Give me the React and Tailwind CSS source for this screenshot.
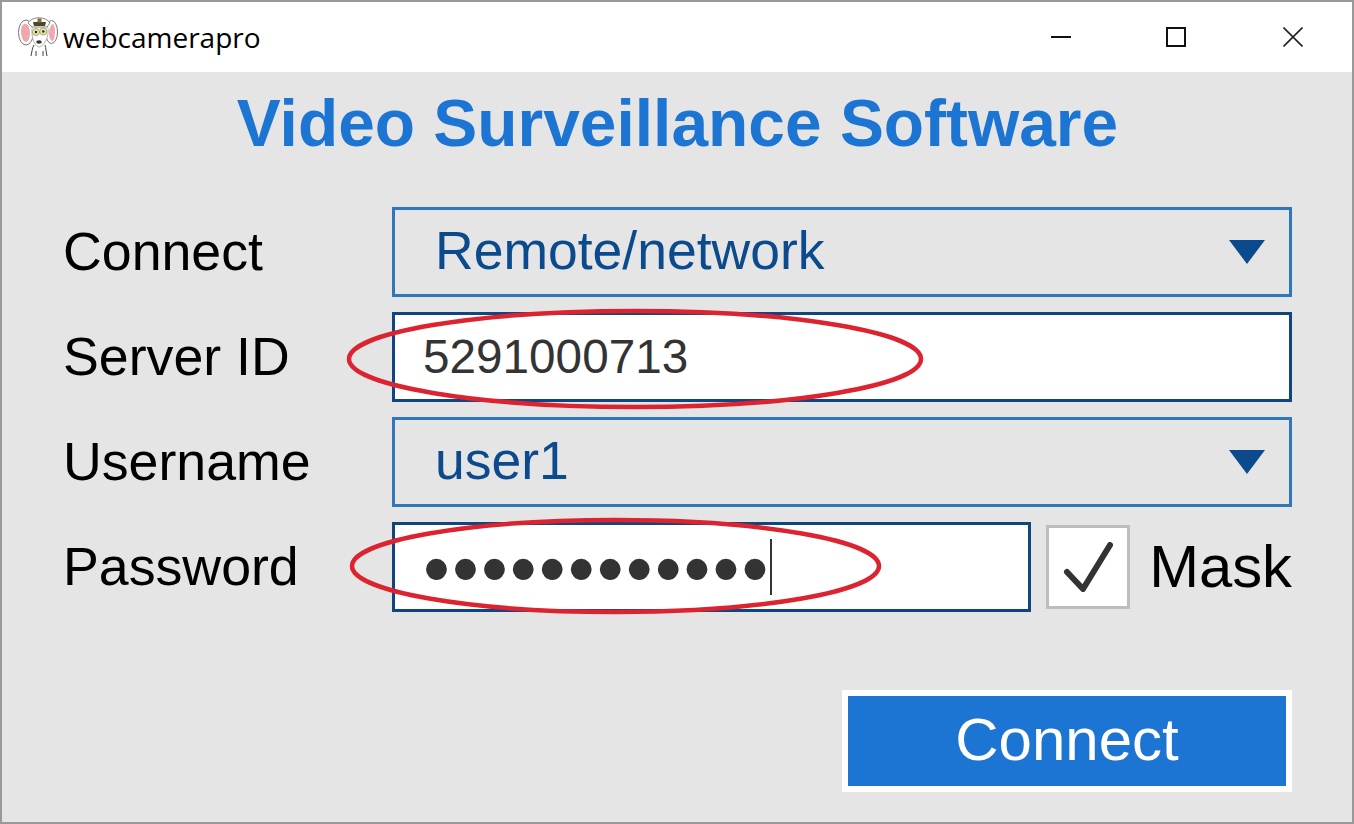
const LIB = "font-['Liberation_Sans',Arial,sans-serif]";

function Mascot() {
  return (
    <svg width="42" height="44" viewBox="0 0 42 44" className="shrink-0">
      <path d="M16 30 C14 33 14 37 13 41 M27 30 C28 33 28 37 29 41 M18 36 L18 41 M25 36 L25 41" stroke="#444" strokeWidth="1" fill="none" />
      <ellipse cx="8" cy="17.5" rx="7.5" ry="12.5" fill="#fff" stroke="#777" strokeWidth="1" />
      <ellipse cx="33.5" cy="17" rx="6" ry="11.5" fill="#fff" stroke="#777" strokeWidth="1" />
      <path d="M6 9 C10 8 12 13 12 18 C12 23 10 27 8 27 C5 27 3 21 3 16 C3 12 4 10 6 9 Z" fill="#f2a7ac" />
      <path d="M35 9 C33 9 31 14 31 18 C31 23 33 26 34 26 C36 26 37 21 37 16 C37 12 36 10 35 9 Z" fill="#f2a7ac" />
      <path d="M14 13 C15 7 29 7 30 13 C31 21 27 31 21 32 C16 31 13 21 14 13 Z" fill="#fff" stroke="#999" strokeWidth="0.7" />
      <path d="M10 8 C14 1 28 1 32 8 L29 12 L14 12 Z" fill="#fff" stroke="#888" strokeWidth="1" />
      <path d="M15 7 L28 7 L27 11 L16 11 Z" fill="#4c4622" />
      <rect x="19.5" y="3.5" width="4" height="4" fill="#7d7130" />
      <circle cx="18" cy="17" r="3.6" fill="#e8e990" stroke="#888" strokeWidth="0.7" />
      <circle cx="25.3" cy="16.5" r="3.6" fill="#e8e990" stroke="#888" strokeWidth="0.7" />
      <circle cx="18" cy="17" r="1.2" fill="#222" />
      <circle cx="25.3" cy="16.5" r="1.2" fill="#222" />
      <ellipse cx="21" cy="27" rx="2.8" ry="1.8" fill="#333" />
    </svg>
  );
}

function Caret() {
  return (
    <svg width="36" height="24" viewBox="0 0 36 24" className="shrink-0">
      <path d="M0 0 H36 L18 24 Z" fill="#0b4a8c" />
    </svg>
  );
}

function Label({ children }) {
  return <div className="w-[329px] shrink-0 text-[53.7px] leading-none text-black">{children}</div>;
}

function Select({ value }) {
  return (
    <div className="flex h-[90px] flex-1 items-center justify-between border-[3px] border-[#2f76ba] pl-[40px] pr-[24px] text-[53.5px] text-[#0b4a8c]">
      <span className="mb-[2px]">{value}</span>
      <Caret />
    </div>
  );
}

function Ellipse({ width, height, className }) {
  return (
    <svg width={width} height={height} viewBox={`0 0 ${width} ${height}`} className={`pointer-events-none absolute ${className}`}>
      <ellipse cx={width / 2} cy={height / 2} rx={width / 2 - 3} ry={height / 2 - 3} fill="none" stroke="#dc2431" strokeWidth="4.5" />
    </svg>
  );
}

export default function App() {
  return (
    <div className={`flex h-[824px] w-[1354px] flex-col border-2 border-[#999999] bg-[#e5e5e5] ${LIB}`}>
      <div className="flex h-[70px] shrink-0 items-center bg-white pl-[16px]">
        <Mascot />
        <span className="ml-[3px] font-['Open_Sans',sans-serif] text-[28px] text-black">webcamerapro</span>
        <div className="ml-auto flex h-full items-center">
          <svg width="20" height="20" viewBox="0 0 20 20" className="mr-[95px]"><path d="M0 10 H20" stroke="#111" strokeWidth="2" /></svg>
          <svg width="20" height="20" viewBox="0 0 20 20" className="mr-[97px]"><rect x="1" y="1" width="18" height="18" fill="none" stroke="#111" strokeWidth="2" /></svg>
          <svg width="20" height="20" viewBox="0 0 20 20" className="mr-[49px]"><path d="M0.5 0.5 L19.5 19.5 M19.5 0.5 L0.5 19.5" stroke="#222" strokeWidth="1.6" /></svg>
        </div>
      </div>

      <div className="flex flex-1 flex-col pl-[61px] pr-[60px]">
        <h1 className="mt-[15px] h-[72px] text-center text-[65.9px] font-bold leading-[72px] text-[#1c75d2]">
          Video Surveillance Software
        </h1>

        <div className="mt-[48px] flex flex-col gap-[15px]">
          <div className="flex items-center">
            <Label>Connect</Label>
            <Select value="Remote/network" />
          </div>

          <div className="flex items-center">
            <Label>Server ID</Label>
            <div className="relative flex h-[90px] flex-1 items-center border-[3px] border-[#0f4680] bg-white pl-[28px] text-[47.7px] text-[#333333]">
              5291000713
              <Ellipse width={578} height={102} className="left-[-49px] top-[-7px]" />
            </div>
          </div>

          <div className="flex items-center">
            <Label>Username</Label>
            <Select value="user1" />
          </div>

          <div className="flex items-center">
            <Label>Password</Label>
            <div className="relative flex h-[90px] w-[639px] items-center border-[3px] border-[#0f4680] bg-white pl-[28px] text-[77px] leading-none tracking-[2px] text-[#333333]">
              <span className="mt-[2px]">••••••••••••</span>
              <span className="ml-[-1px] h-[56px] w-[2px] bg-[#333333]" />
              <Ellipse width={533} height={98} className="left-[-46px] top-[-8px]" />
            </div>
            <div className="ml-[15px] flex h-[84px] w-[84px] items-center justify-center border-[3px] border-[#bdbdbd] bg-white">
              <svg width="50" height="50" viewBox="0 0 50 50">
                <path d="M4 30 L20 47 L47 3" fill="none" stroke="#333" strokeWidth="6" strokeLinecap="round" strokeLinejoin="round" />
              </svg>
            </div>
            <span className="ml-auto text-[59.8px] leading-none text-black">Mask</span>
          </div>
        </div>

        <button className="ml-auto mt-[78px] flex h-[102px] w-[450px] items-center justify-center border-[6px] border-white bg-[#1c75d2] pb-[3px] text-[60px] text-white">
          Connect
        </button>
      </div>
    </div>
  );
}
